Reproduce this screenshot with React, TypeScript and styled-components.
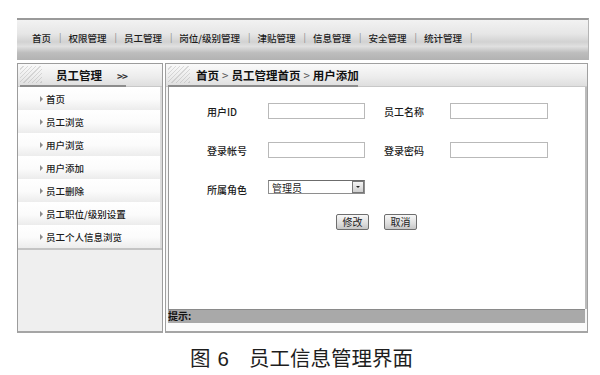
import React from 'react'
import styled, { createGlobalStyle } from 'styled-components'

const FONT = `'Noto Sans CJK SC', 'Noto Sans', sans-serif`

const navItems = ['首页', '权限管理', '员工管理', '岗位/级别管理', '津贴管理', '信息管理', '安全管理', '统计管理']
const menuItems = ['首页', '员工浏览', '用户浏览', '用户添加', '员工删除', '员工职位/级别设置', '员工个人信息浏览']

const GlobalStyle = createGlobalStyle`
  html, body {
    margin: 0;
    padding: 0;
    background: #ffffff;
    font-family: ${FONT};
    color: #222;
  }
`

const Page = styled.div`
  width: 600px;
  height: 375px;
  padding-top: 18px;
  box-sizing: border-box;
  overflow: hidden;
  display: flex;
  flex-direction: column;
`

const TopBar = styled.div`
  margin-left: 17px;
  width: 572px;
  height: 42px;
  box-sizing: border-box;
  border-top: 2px solid #9a9a9a;
  border-right: 1px solid #b5b5b5;
  background: linear-gradient(
    to bottom,
    #f2f2f2 0%,
    #e6e6e6 35%,
    #d2d2d2 55%,
    #e0e0e0 66%,
    #bdbdbd 82%,
    #b2b2b2 100%
  );
  display: flex;
  align-items: center;
  padding: 0 0 5px 15px;
`

const NavItem = styled.span`
  font-size: 9.5px;
  font-weight: 500;
  color: #1c1c1c;
  white-space: nowrap;
`

const NavSep = styled.span`
  font-size: 9px;
  color: #8a8a8a;
  margin: 0 7px 0 8px;
`

const Main = styled.div`
  margin: 3px 0 0 17px;
  width: 571px;
  height: 270px;
  display: flex;
  gap: 2px;
`

const Side = styled.div`
  width: 146px;
  box-sizing: border-box;
  border: 1px solid #9c9c9c;
  border-bottom: 2px solid #a5a5a5;
  background: #efefef;
  display: flex;
  flex-direction: column;
`

const PanelHead = styled.div<{ $lineWidth: number }>`
  position: relative;
  height: 23px;
  flex-shrink: 0;
  box-sizing: border-box;
  border-bottom: 1px solid #c8c8c8;
  background:
    repeating-linear-gradient(135deg, rgba(0, 0, 0, 0) 0 2px, rgba(150, 150, 150, 0.3) 2px 3px) 2px 2px / 22px 17px no-repeat,
    linear-gradient(to bottom, #fafafa 0%, #ececec 60%, #dedede 100%);
  display: flex;
  align-items: center;

  &::after {
    content: '';
    position: absolute;
    left: 2px;
    bottom: -1px;
    width: ${p => p.$lineWidth}px;
    height: 2px;
    background: #8c8c8c;
  }
`

const SideTitle = styled.span`
  font-size: 11.5px;
  font-weight: bold;
  color: #111;
  margin-left: 38px;
`

const Chevrons = styled.span`
  font-size: 10px;
  font-weight: bold;
  color: #333;
  margin-left: 15px;
  letter-spacing: -1px;
`

const Menu = styled.ul`
  list-style: none;
  margin: 0;
  padding: 0;
  border-bottom: 2px solid #c4c4c4;
`

const MenuItem = styled.li`
  height: 23px;
  display: flex;
  align-items: center;
  padding-left: 22px;
  font-size: 9.5px;
  font-weight: 500;
  color: #1c1c1c;
  background: linear-gradient(to bottom, #ffffff 0%, #fbfbfb 55%, #ececec 100%);
  border-right: 2px solid #dadada;
`

const Arrow = styled.span`
  width: 0;
  height: 0;
  border-top: 3px solid transparent;
  border-bottom: 3px solid transparent;
  border-left: 3px solid #8a8a8a;
  margin-right: 3px;
`

const Content = styled.div`
  flex: 1;
  box-sizing: border-box;
  border: 1px solid #a0a0a0;
  border-bottom: 2px solid #a5a5a5;
  display: flex;
  flex-direction: column;
  background: #f6f6f6;
`

const Crumbs = styled.span`
  font-size: 11.5px;
  font-weight: bold;
  color: #111;
  margin-left: 30px;
`

const CrumbSep = styled.span`
  font-weight: normal;
  color: #555;
  margin: 0 3px;
`

const Body = styled.div`
  flex: 1;
  margin-left: 2px;
  border-left: 1px solid #9a9a9a;
  border-right: 2px solid #bcbcbc;
  background: #ffffff;
  padding: 16px 0 0 38px;
`

const FormGrid = styled.div`
  display: grid;
  grid-template-columns: 61px 97px 19px 66px 98px;
  grid-auto-rows: 16px;
  row-gap: 23px;
  align-items: center;
`

const Label = styled.span`
  font-size: 10px;
  font-weight: 500;
  color: #1c1c1c;
`

const TextInput = styled.div`
  height: 16px;
  box-sizing: border-box;
  border: 1px solid #b9b9b9;
  background: #fff;
`

const SelectBox = styled.div`
  height: 14px;
  margin-top: -4px;
  box-sizing: border-box;
  border: 1px solid #8e8e8e;
  border-top-color: #6c6c6c;
  background: #fff;
  display: flex;
  align-items: center;
  font-size: 10px;
  color: #1c1c1c;
  padding-left: 3px;
`

const SelectText = styled.span`
  flex: 1;
`

const DropButton = styled.span`
  width: 12px;
  height: 12px;
  box-sizing: border-box;
  border: 1px solid #777;
  background: linear-gradient(to bottom, #f4f4f4, #cfcfcf);
  display: flex;
  align-items: center;
  justify-content: center;

  &::before {
    content: '';
    border-left: 2px solid transparent;
    border-right: 2px solid transparent;
    border-top: 2px solid #222;
  }
`

const Buttons = styled.div`
  display: flex;
  gap: 15px;
  margin: 17px 0 0 129px;
`

const Button = styled.button`
  width: 33px;
  height: 16px;
  padding: 0;
  box-sizing: border-box;
  border: 1px solid #6e6e6e;
  border-radius: 2px;
  background: linear-gradient(to bottom, #f7f7f7 0%, #dedede 60%, #c6c6c6 100%);
  font-family: ${FONT};
  font-size: 10px;
  color: #1c1c1c;
  line-height: 14px;
`

const Tip = styled.div`
  height: 13px;
  margin-left: 2px;
  margin-right: 2px;
  background: #a9a9a9;
  border-top: 1px solid #8a8a8a;
  font-size: 10px;
  font-weight: bold;
  color: #111;
  line-height: 12px;
`

const TipGap = styled.div`
  height: 8px;
  background: #fbfbfb;
`

const Caption = styled.div`
  margin-top: 9px;
  text-align: center;
  font-size: 20.5px;
  color: #1e1e1e;
  padding-left: 3px;
`

const CaptionNum = styled.span`
  margin: 0 20px 0 7px;
  font-family: 'Liberation Sans', sans-serif;
`

export default function App() {
  return (
    <>
      <GlobalStyle />
      <Page>
        <TopBar>
          {navItems.map(item => (
            <React.Fragment key={item}>
              <NavItem>{item}</NavItem>
              <NavSep>|</NavSep>
            </React.Fragment>
          ))}
        </TopBar>
        <Main>
          <Side>
            <PanelHead $lineWidth={106}>
              <SideTitle>员工管理</SideTitle>
              <Chevrons>&gt;&gt;</Chevrons>
            </PanelHead>
            <Menu>
              {menuItems.map(item => (
                <MenuItem key={item}>
                  <Arrow />
                  {item}
                </MenuItem>
              ))}
            </Menu>
          </Side>
          <Content>
            <PanelHead $lineWidth={190}>
              <Crumbs>
                首页<CrumbSep>&gt;</CrumbSep>员工管理首页<CrumbSep>&gt;</CrumbSep>用户添加
              </Crumbs>
            </PanelHead>
            <Body>
              <FormGrid>
                <Label>用户ID</Label>
                <TextInput />
                <span />
                <Label>员工名称</Label>
                <TextInput />
                <Label>登录帐号</Label>
                <TextInput />
                <span />
                <Label>登录密码</Label>
                <TextInput />
                <Label>所属角色</Label>
                <SelectBox>
                  <SelectText>管理员</SelectText>
                  <DropButton />
                </SelectBox>
              </FormGrid>
              <Buttons>
                <Button>修改</Button>
                <Button>取消</Button>
              </Buttons>
            </Body>
            <Tip>提示:</Tip>
            <TipGap />
          </Content>
        </Main>
        <Caption>
          图<CaptionNum>6</CaptionNum>员工信息管理界面
        </Caption>
      </Page>
    </>
  )
}
